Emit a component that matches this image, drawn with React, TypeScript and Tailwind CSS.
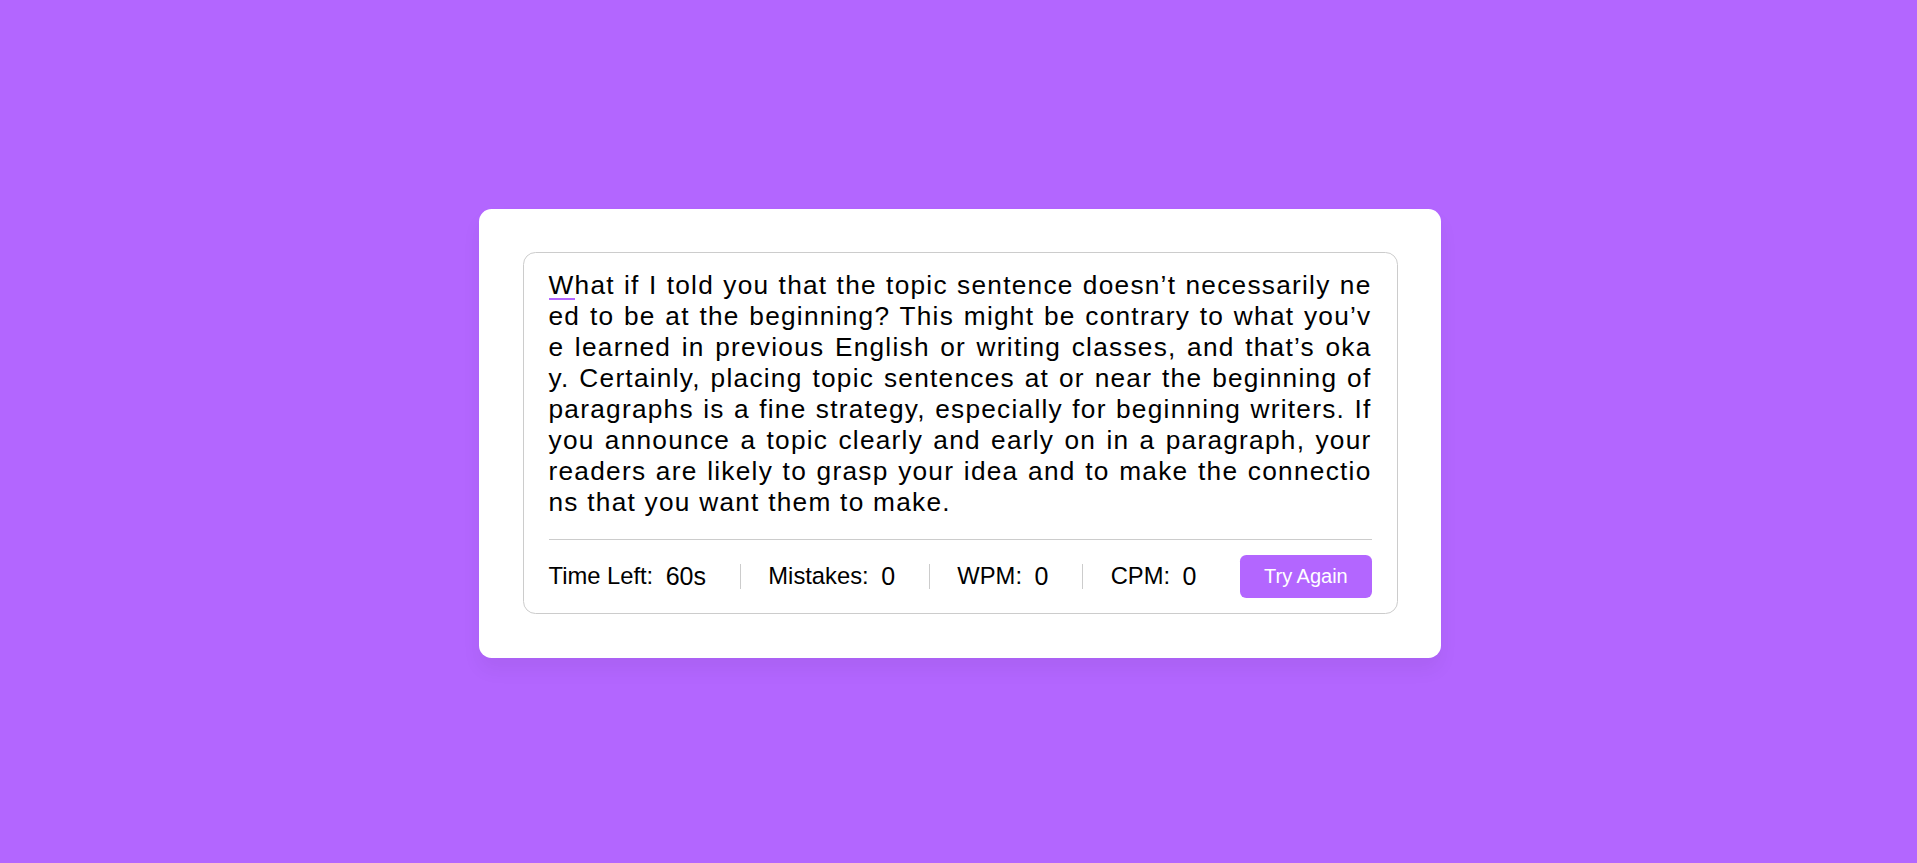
import React from "react";

const lines = [
  "hat if I told you that the topic sentence doesn’t necessarily ne",
  "ed to be at the beginning? This might be contrary to what you’v",
  "e learned in previous English or writing classes, and that’s oka",
  "y. Certainly, placing topic sentences at or near the beginning of",
  "paragraphs is a fine strategy, especially for beginning writers. If",
  "you announce a topic clearly and early on in a paragraph, your",
  "readers are likely to grasp your idea and to make the connectio",
  "ns that you want them to make.",
];

export default function App() {
  const stats = [
    { label: "Time Left:", value: "60s" },
    { label: "Mistakes:", value: "0" },
    { label: "WPM:", value: "0" },
    { label: "CPM:", value: "0" },
  ];
  return (
    <div
      className="min-h-screen flex items-center justify-center bg-[#b366ff] text-black pl-[3px] pt-[3px]"
      style={{ fontFamily: '"Liberation Sans", Arial, sans-serif' }}
    >
      <div className="w-[962.5px] p-[43.75px] bg-white rounded-[12.5px] shadow-[0_12px_19px_rgba(0,0,0,0.05)]">
        <div className="rounded-[12.5px] border border-[#cccccc] px-[25px] pt-[16.25px]">
          <div className="text-[26.25px] tracking-[1.25px] leading-[31px]">
            {lines.map((l, i) => (
              <div
                key={i}
                className={
                  i < lines.length - 1
                    ? "text-justify [text-align-last:justify] whitespace-nowrap"
                    : "text-left whitespace-nowrap"
                }
              >
                {i === 0 && (
                  <span className="relative after:content-[''] after:absolute after:left-0 after:bottom-0 after:h-[2px] after:w-full after:bg-[#b366ff]">
                    W
                  </span>
                )}
                {l}
              </div>
            ))}
          </div>
          <div className="mt-[21.25px] py-[15px] border-t border-[#cccccc] flex items-center justify-between">
            <ul className="flex justify-between w-[calc(100%-175px)]">
              {stats.map((s, i) => (
                <li
                  key={i}
                  className={
                    "flex items-center h-[25px] " +
                    (i > 0 ? "pl-[27.5px] border-l border-[#cccccc]" : "")
                  }
                >
                  <span className="text-[23.75px]">{s.label}</span>
                  <span className="text-[25px] ml-[12.5px]">{s.value}</span>
                </li>
              ))}
            </ul>
            <button className="w-[131.25px] py-[10px] text-[20px] leading-[23px] rounded-[6.25px] bg-[#b366ff] text-white">
              Try Again
            </button>
          </div>
        </div>
      </div>
    </div>
  );
}
